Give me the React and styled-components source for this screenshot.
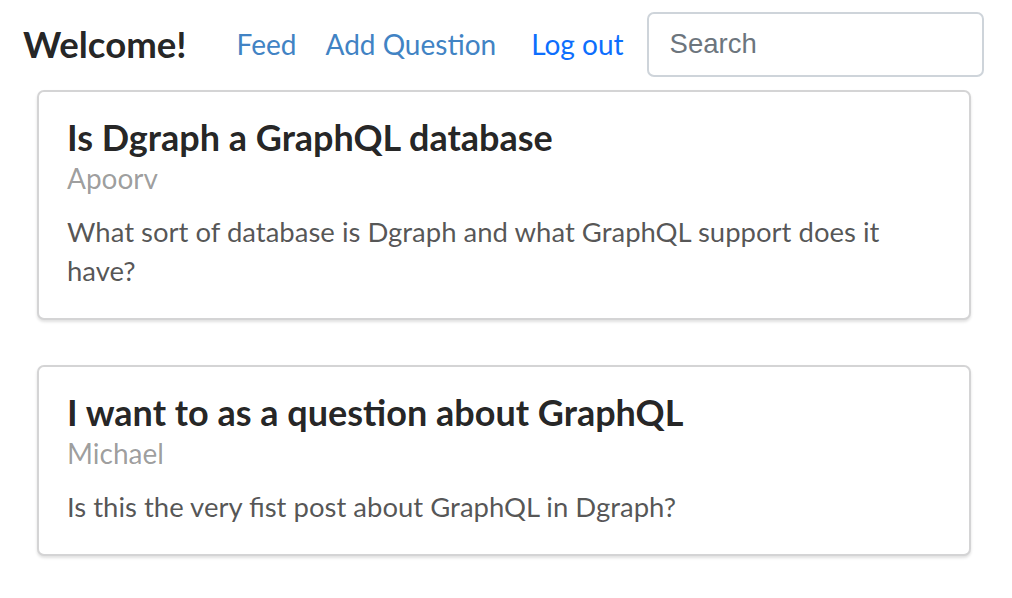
import React from "react";
import styled, { createGlobalStyle } from "styled-components";

const GlobalStyle = createGlobalStyle`
  html, body {
    margin: 0;
    padding: 0;
    background: #ffffff;
    font-family: Lato, "Helvetica Neue", Arial, sans-serif;
  }
`;

const Page = styled.div`
  width: 1012px;
  height: 598px;
  overflow: hidden;
  background: #ffffff;
`;

const NavBar = styled.nav`
  display: flex;
  align-items: center;
  height: 64px;
  padding: 12px 0 0 23px;
`;

const Brand = styled.div`
  font-size: 36.6px;
  font-weight: 700;
  color: rgba(0, 0, 0, 0.87);
  margin-right: 50px;
`;

const NavLink = styled.a`
  font-size: 28px;
  color: ${(p) => (p.$strong ? "#0d6efd" : "#4183c4")};
  text-decoration: none;
  margin-right: ${(p) => p.$gap || 29}px;
  cursor: pointer;
`;

const SearchInput = styled.input`
  box-sizing: border-box;
  width: 337px;
  height: 65px;
  padding: 0 21px;
  font-family: "Liberation Sans", Arial, sans-serif;
  font-size: 27.5px;
  color: #212529;
  border: 2px solid #ced4da;
  border-radius: 7px;
  outline: none;

  &::placeholder {
    color: #6c757d;
  }
`;

const Feed = styled.main`
  display: flex;
  flex-direction: column;
  gap: 45px;
  padding: 14px 41px 0 37px;
`;

const Card = styled.div`
  box-sizing: border-box;
  border: 2px solid #d4d4d5;
  border-radius: 7px;
  box-shadow: 0 2px 3px rgba(0, 0, 0, 0.12);
  padding: 22px 28px 28px;
  background: #fff;
`;

const Title = styled.h2`
  margin: 0;
  font-size: 36px;
  font-weight: 700;
  line-height: 46px;
  color: rgba(0, 0, 0, 0.87);
`;

const Author = styled.div`
  font-size: 28px;
  line-height: 36px;
  color: rgba(0, 0, 0, 0.4);
`;

const Description = styled.p`
  margin: 16px 0 0;
  font-size: 27.5px;
  line-height: 39px;
  color: rgba(0, 0, 0, 0.68);
`;

const questions = [
  {
    id: 1,
    title: "Is Dgraph a GraphQL database",
    author: "Apoorv",
    text: "What sort of database is Dgraph and what GraphQL support does it have?",
  },
  {
    id: 2,
    title: "I want to as a question about GraphQL",
    author: "Michael",
    text: "Is this the very fist post about GraphQL in Dgraph?",
  },
];

export default function App() {
  return (
    <Page>
      <GlobalStyle />
      <NavBar>
        <Brand>Welcome!</Brand>
        <NavLink>Feed</NavLink>
        <NavLink $gap={35}>Add Question</NavLink>
        <NavLink $strong $gap={23}>
          Log out
        </NavLink>
        <SearchInput placeholder="Search" />
      </NavBar>
      <Feed>
        {questions.map((q) => (
          <Card key={q.id}>
            <Title>{q.title}</Title>
            <Author>{q.author}</Author>
            <Description>{q.text}</Description>
          </Card>
        ))}
      </Feed>
    </Page>
  );
}
